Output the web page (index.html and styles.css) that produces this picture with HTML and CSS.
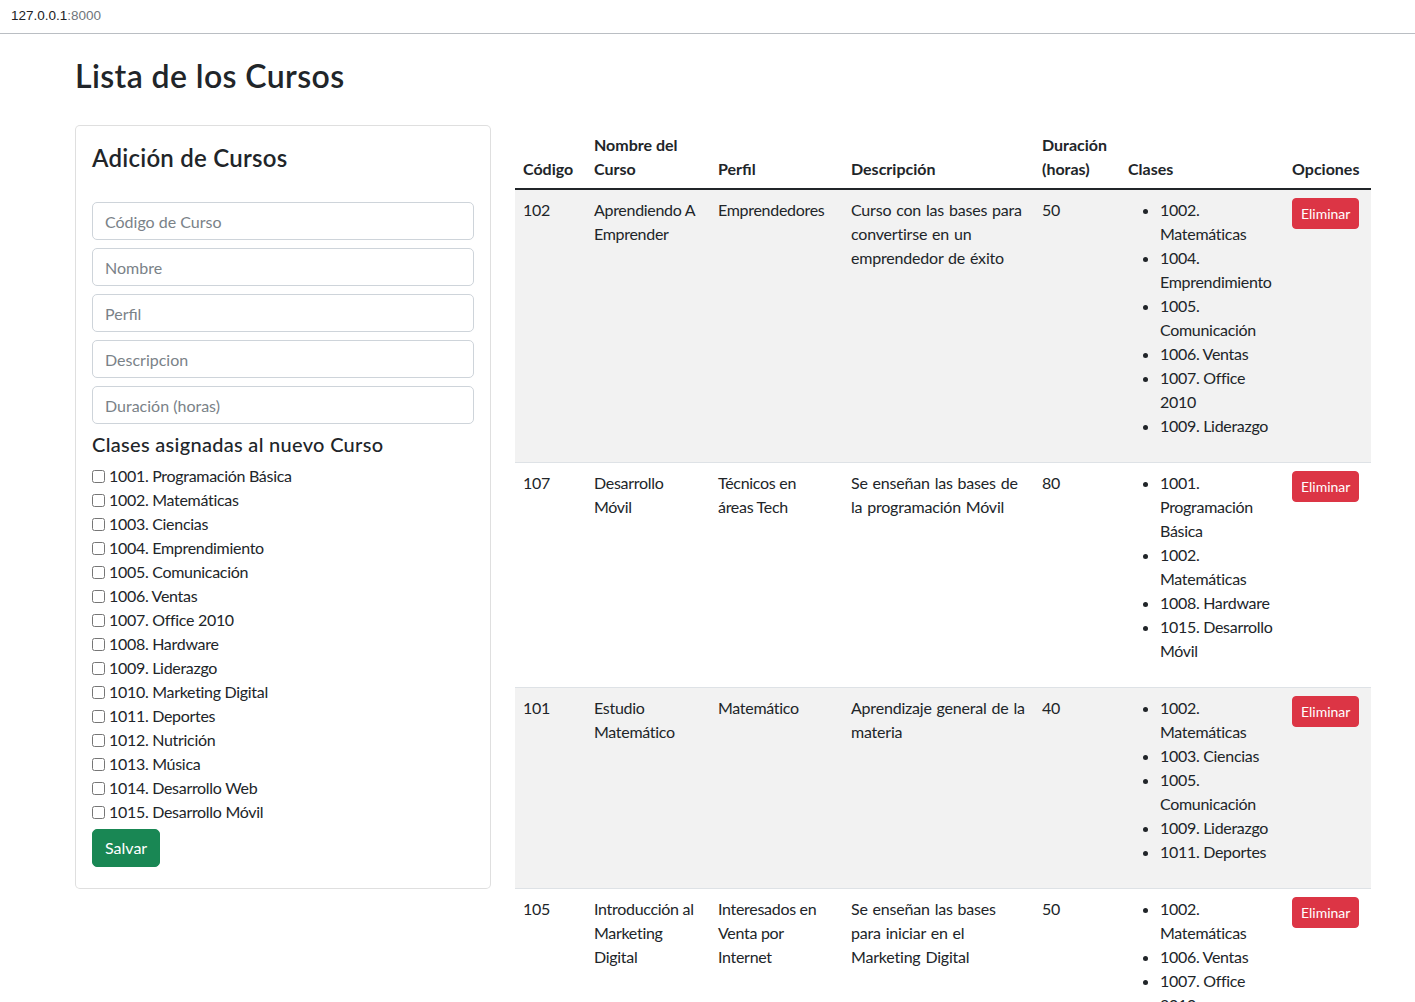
FILE: index.html
```html
<!DOCTYPE html>
<html lang="es">
<head>
<meta charset="utf-8">
<title>Lista de los Cursos</title>
<link rel="stylesheet" href="styles.css">
</head>
<body>
<div class="urlbar"><span class="host">127.0.0.1</span><span class="port">:8000</span></div>
<div class="container">
  <h1 class="title">Lista de los Cursos</h1>
  <div class="layout">
    <div class="card">
      <h4 class="card-title">Adición de Cursos</h4>
      <form class="form">
        <input class="form-control" type="text" placeholder="Código de Curso">
        <input class="form-control" type="text" placeholder="Nombre">
        <input class="form-control" type="text" placeholder="Perfil">
        <input class="form-control" type="text" placeholder="Descripcion">
        <input class="form-control" type="text" placeholder="Duración (horas)">
        <h5 class="sub-title">Clases asignadas al nuevo Curso</h5>
        <div class="checks">
          <label class="check"><input type="checkbox">1001. Programación Básica</label>
          <label class="check"><input type="checkbox">1002. Matemáticas</label>
          <label class="check"><input type="checkbox">1003. Ciencias</label>
          <label class="check"><input type="checkbox">1004. Emprendimiento</label>
          <label class="check"><input type="checkbox">1005. Comunicación</label>
          <label class="check"><input type="checkbox">1006. Ventas</label>
          <label class="check"><input type="checkbox">1007. Office 2010</label>
          <label class="check"><input type="checkbox">1008. Hardware</label>
          <label class="check"><input type="checkbox">1009. Liderazgo</label>
          <label class="check"><input type="checkbox">1010. Marketing Digital</label>
          <label class="check"><input type="checkbox">1011. Deportes</label>
          <label class="check"><input type="checkbox">1012. Nutrición</label>
          <label class="check"><input type="checkbox">1013. Música</label>
          <label class="check"><input type="checkbox">1014. Desarrollo Web</label>
          <label class="check"><input type="checkbox">1015. Desarrollo Móvil</label>
        </div>
        <button type="button" class="btn btn-success">Salvar</button>
      </form>
    </div>
    <div class="table-wrap">
      <table class="table">
        <colgroup>
          <col class="c-cod"><col class="c-nom"><col class="c-per"><col class="c-des"><col class="c-dur"><col class="c-cla"><col class="c-opc">
        </colgroup>
        <thead>
          <tr>
            <th>Código</th>
            <th>Nombre del Curso</th>
            <th>Perfil</th>
            <th>Descripción</th>
            <th>Duración (horas)</th>
            <th>Clases</th>
            <th>Opciones</th>
          </tr>
        </thead>
        <tbody>
          <tr>
            <td>102</td>
            <td>Aprendiendo A Emprender</td>
            <td>Emprendedores</td>
            <td class="desc">Curso con las bases para convertirse en un emprendedor de éxito</td>
            <td>50</td>
            <td><ul class="classes">
              <li>1002. Matemáticas</li>
              <li>1004. Emprendimiento</li>
              <li>1005. Comunicación</li>
              <li>1006. Ventas</li>
              <li>1007. Office 2010</li>
              <li>1009. Liderazgo</li>
            </ul></td>
            <td><button type="button" class="btn btn-danger btn-sm">Eliminar</button></td>
          </tr>
          <tr>
            <td>107</td>
            <td>Desarrollo Móvil</td>
            <td>Técnicos en áreas Tech</td>
            <td class="desc">Se enseñan las bases de la programación Móvil</td>
            <td>80</td>
            <td><ul class="classes">
              <li>1001. Programación Básica</li>
              <li>1002. Matemáticas</li>
              <li>1008. Hardware</li>
              <li>1015. Desarrollo Móvil</li>
            </ul></td>
            <td><button type="button" class="btn btn-danger btn-sm">Eliminar</button></td>
          </tr>
          <tr>
            <td>101</td>
            <td>Estudio Matemático</td>
            <td>Matemático</td>
            <td class="desc">Aprendizaje general de la materia</td>
            <td>40</td>
            <td><ul class="classes">
              <li>1002. Matemáticas</li>
              <li>1003. Ciencias</li>
              <li>1005. Comunicación</li>
              <li>1009. Liderazgo</li>
              <li>1011. Deportes</li>
            </ul></td>
            <td><button type="button" class="btn btn-danger btn-sm">Eliminar</button></td>
          </tr>
          <tr>
            <td>105</td>
            <td>Introducción al Marketing Digital</td>
            <td>Interesados en Venta por Internet</td>
            <td class="desc">Se enseñan las bases para iniciar en el Marketing Digital</td>
            <td>50</td>
            <td><ul class="classes">
              <li>1002. Matemáticas</li>
              <li>1006. Ventas</li>
              <li>1007. Office 2010</li>
              <li>1010. Marketing Digital</li>
            </ul></td>
            <td><button type="button" class="btn btn-danger btn-sm">Eliminar</button></td>
          </tr>
        </tbody>
      </table>
    </div>
  </div>
</div>
</body>
</html>
```
FILE: styles.css
```css
* { box-sizing: border-box; }

html, body { margin: 0; padding: 0; background: #fff; }

body {
  font-family: Lato, "Open Sans", sans-serif;
  font-size: 16px;
  line-height: 1.5;
  color: #212529;
}

.urlbar {
  height: 34px;
  padding: 0 0 0 11px;
  line-height: 31px;
  font-family: "Liberation Sans", Arial, sans-serif;
  font-size: 13.5px;
  border-bottom: 1px solid #babec3;
}
.urlbar .host { color: #202124; }
.urlbar .port { color: #6f757b; }

.container {
  width: 1320px;
  margin-left: 63px;
  padding: 0 12px;
}

.title {
  margin: 23px 0 30px;
  font-size: 32px;
  font-weight: 600;
  line-height: 1.2;
  letter-spacing: 0.4px;
}

.layout {
  display: grid;
  grid-template-columns: 416px 856px;
  column-gap: 24px;
  align-items: start;
}

.card {
  border: 1px solid rgba(0, 0, 0, 0.125);
  border-radius: 5px;
  padding: 16px;
  background: #fff;
}

.card-title {
  margin: 2px 0 29px;
  font-size: 24px;
  font-weight: 600;
  line-height: 1.2;
  letter-spacing: 0.25px;
}

.form { margin: 0 0 5px; }

.form-control {
  display: block;
  width: 100%;
  height: 38px;
  margin: 0 0 8px;
  padding: 6px 12px;
  font-family: inherit;
  font-size: 16px;
  line-height: 24px;
  color: #212529;
  background: #fff;
  border: 1px solid #ced4da;
  border-radius: 5px;
}
.form-control::placeholder { color: #7a8288; opacity: 1; }

.sub-title {
  margin: 0 0 8px;
  font-size: 20px;
  font-weight: 500;
  line-height: 1.2;
  letter-spacing: 0.3px;
}

.checks { display: flex; flex-direction: column; }

.check {
  display: flex;
  align-items: center;
  height: 24px;
  letter-spacing: -0.3px;
}
.check input {
  width: 13px;
  height: 13px;
  margin: 0 4px 0 0;
}

.btn {
  display: inline-block;
  font-family: inherit;
  font-size: 16px;
  line-height: 24px;
  padding: 6px 12px;
  border: 1px solid transparent;
  border-radius: 5px;
  color: #fff;
  cursor: pointer;
}
.btn-success {
  margin-top: 5px;
  background: #198754;
  border-color: #198754;
}
.btn-danger {
  background: #dc3545;
  border-color: #dc3545;
}
.btn-sm {
  font-size: 14px;
  line-height: 21px;
  padding: 4px 8px;
  border-radius: 4px;
}

.table {
  width: 856px;
  table-layout: fixed;
  border-collapse: collapse;
  color: #212529;
}
.c-cod { width: 71px; }
.c-nom { width: 124px; }
.c-per { width: 133px; }
.c-des { width: 191px; }
.c-dur { width: 86px; }
.c-cla { width: 164px; }
.c-opc { width: 87px; }

.table th,
.table td {
  padding: 8px;
  text-align: left;
}
.table th {
  padding-bottom: 7px;
  vertical-align: bottom;
  font-weight: 700;
  border-bottom: 2px solid #212529;
}
.table td {
  vertical-align: top;
  letter-spacing: -0.3px;
  border-bottom: 1px solid #dee2e6;
}
.table td.desc {
  letter-spacing: -0.2px;
  word-spacing: 1px;
}
.table tbody tr:nth-child(odd) td { background: #f2f2f2; }

.classes {
  margin: 0 0 16px;
  padding-left: 32px;
}
```
